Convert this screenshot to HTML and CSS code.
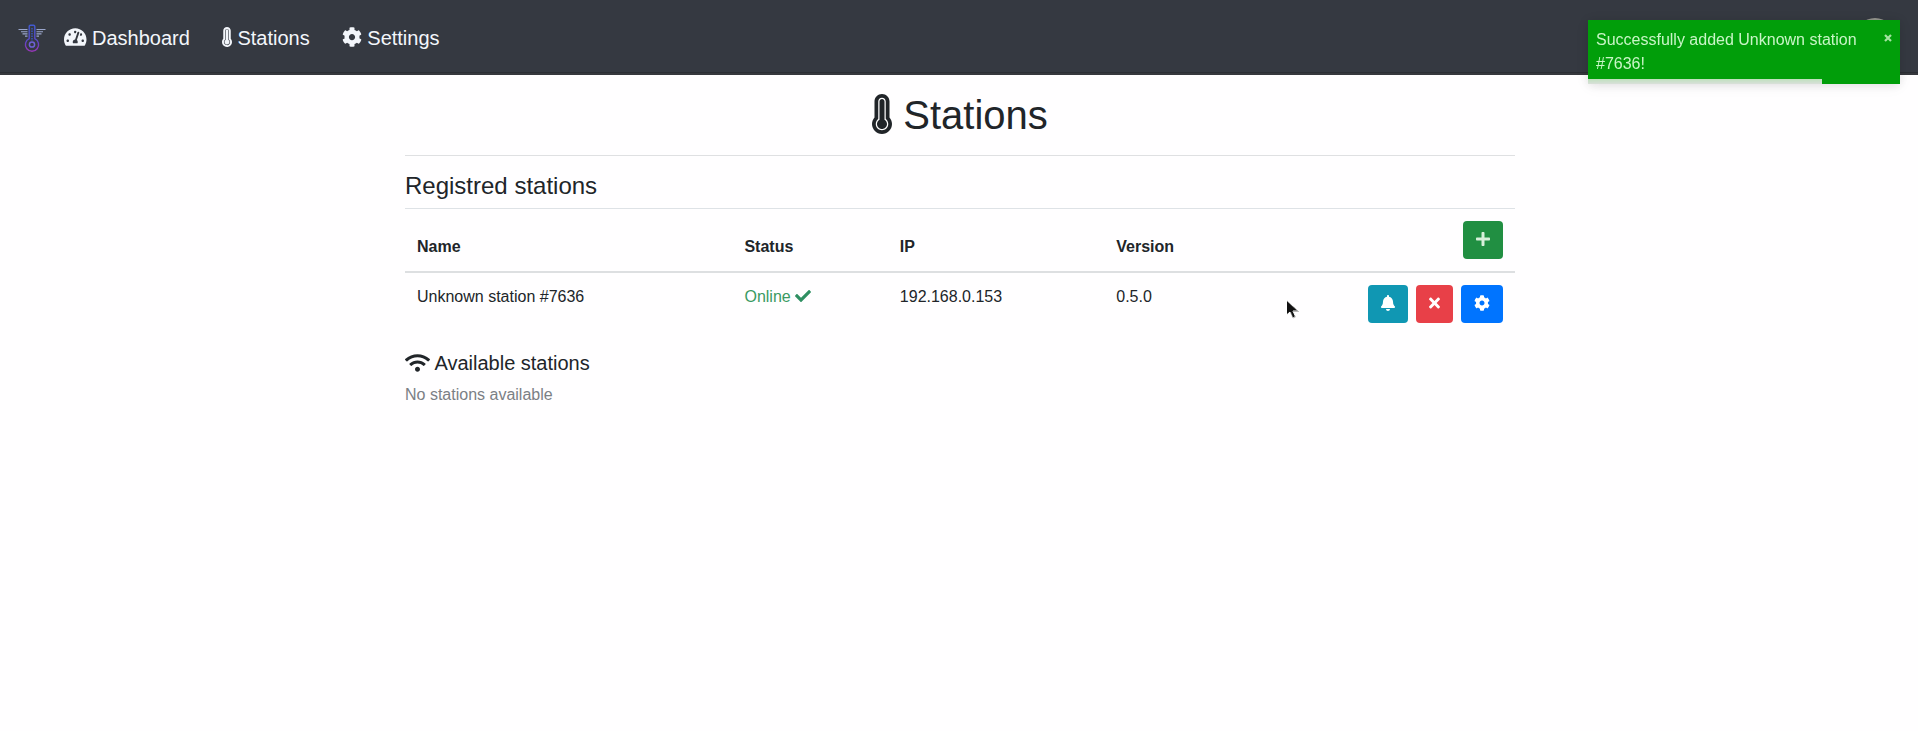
FILE: index.html
```html
<!DOCTYPE html>
<html lang="en">
<head>
<meta charset="utf-8">
<title>Stations</title>
<link rel="stylesheet" href="styles.css">
</head>
<body>
<svg class="symbols" aria-hidden="true">
  <symbol id="thermometer" viewBox="0 0 256 512"><path d="M224 96c0-53.019-42.981-96-96-96S32 42.981 32 96v203.347C12.225 321.756.166 351.136 0 383.333c-.359 70.303 56.787 128.176 127.089 128.664.299.002.61.003.911.003 70.698 0 128-57.304 128-128 0-32.459-12.088-62.09-32-84.653V96zm-96 368l-.576-.002c-43.86-.304-79.647-36.544-79.423-80.42.173-33.98 19.266-51.652 31.999-66.08V96c0-26.467 21.533-48 48-48s48 21.533 48 48v221.498c12.63 14.312 32 32.164 32 66.502 0 44.112-35.888 80-80 80zm64-80c0 35.346-28.654 64-64 64s-64-28.654-64-64c0-23.685 12.876-44.349 32-55.417V96c0-17.673 14.327-32 32-32s32 14.327 32 32v232.583c19.124 11.068 32 31.732 32 55.417z"/></symbol>
  <symbol id="cog" viewBox="0 0 512 512"><path d="M487.4 315.7l-42.6-24.6c4.3-23.2 4.3-47 0-70.2l42.6-24.6c4.9-2.8 7.1-8.6 5.5-14-11.1-35.6-30-67.8-54.7-94.6-3.8-4.1-10-5.1-14.8-2.3L380.8 110c-17.9-15.4-38.5-27.3-60.8-35.1V25.8c0-5.6-3.9-10.5-9.4-11.7-36.7-8.2-74.3-7.8-109.2 0-5.5 1.2-9.4 6.1-9.4 11.7V75c-22.2 7.9-42.8 19.8-60.8 35.1L88.7 85.5c-4.9-2.8-11-1.9-14.8 2.3-24.7 26.7-43.6 58.9-54.7 94.6-1.7 5.4.6 11.2 5.5 14L67.3 221c-4.3 23.2-4.3 47 0 70.2l-42.6 24.6c-4.9 2.8-7.1 8.6-5.5 14 11.1 35.6 30 67.8 54.7 94.6 3.8 4.1 10 5.1 14.8 2.3l42.6-24.6c17.9 15.4 38.5 27.3 60.8 35.1v49.2c0 5.6 3.9 10.5 9.4 11.7 36.7 8.2 74.3 7.8 109.2 0 5.5-1.2 9.4-6.1 9.4-11.7v-49.2c22.2-7.9 42.8-19.8 60.8-35.1l42.6 24.6c4.9 2.8 11 1.9 14.8-2.3 24.7-26.7 43.6-58.9 54.7-94.6 1.5-5.5-.7-11.3-5.6-14.1zM256 336c-44.1 0-80-35.9-80-80s35.9-80 80-80 80 35.9 80 80-35.9 80-80 80z"/></symbol>
</svg>

<header class="navbar">
  <a class="brand" href="#" aria-label="Home">
    <svg class="logo" viewBox="0 0 28 28" fill="none">
      <defs>
        <linearGradient id="logo-fade" gradientUnits="userSpaceOnUse" x1="0" y1="0" x2="0" y2="28">
          <stop offset="0" stop-color="#3f5bd0"/><stop offset=".6" stop-color="#5b48c8"/><stop offset="1" stop-color="#9a35b5"/>
        </linearGradient>
      </defs>
      <path d="M.500 5.500h9M3 7.700h6.500M4.500 9.900h5M7 12.100h2.500M27.500 5.500h-9M25 7.700h-6.500M23.500 9.900h-5M21 12.100h-2.500" stroke="#9aa6cc" stroke-width="1.100"/>
      <path d="M11.200 14.700V2.500q0-1.300 1.300-1.300h3q1.300 0 1.300 1.300v12.200a6.600 6.600 0 1 1-5.600 0z" stroke="url(#logo-fade)" stroke-width="1.400"/>
      <path d="M14 4v13" stroke="#3b52b8" stroke-width="1.600" stroke-dasharray="1.500 1"/>
      <circle cx="14" cy="20.500" r="2.600" stroke="#7060d8" stroke-width="1.500"/>
    </svg>
  </a>
  <nav class="menu">
    <a href="#"><svg class="icon w-gauge" viewBox="0 0 576 512"><path d="M288 32C128.940 32 0 160.940 0 320c0 52.800 14.250 102.260 39.060 144.800 5.610 9.620 16.300 15.200 27.440 15.200h443c11.140 0 21.830-5.580 27.440-15.200C561.750 422.260 576 372.800 576 320c0-159.060-128.940-288-288-288zm0 64c14.710 0 26.580 10.130 30.320 23.650-1.110 2.260-2.640 4.230-3.450 6.670l-9.220 27.670c-5.130 3.490-10.970 6.010-17.640 6.010-17.670 0-32-14.330-32-32S270.330 96 288 96zM96 384c-17.670 0-32-14.330-32-32s14.330-32 32-32 32 14.330 32 32-14.330 32-32 32zm48-160c-17.670 0-32-14.330-32-32s14.330-32 32-32 32 14.330 32 32-14.330 32-32 32zm246.770-72.410l-61.330 184C343.130 347.330 352 364.540 352 384c0 11.720-3.380 22.550-8.880 32H232.880c-5.500-9.450-8.880-20.280-8.880-32 0-33.940 26.500-61.430 59.900-63.590l61.340-184.010c4.170-12.560 17.730-19.450 30.360-15.170 12.570 4.190 19.350 17.790 15.170 30.360zm14.660 57.200l15.520-46.550c3.470-1.290 7.130-2.230 11.050-2.230 17.670 0 32 14.330 32 32s-14.330 32-32 32c-11.380-.010-20.890-6.280-26.570-15.220zM480 384c-17.670 0-32-14.330-32-32s14.330-32 32-32 32 14.330 32 32-14.330 32-32 32z"/></svg> Dashboard</a>
    <a href="#"><svg class="icon w-thermometer"><use href="#thermometer"/></svg> Stations</a>
    <a href="#"><svg class="icon w-cog"><use href="#cog"/></svg> Settings</a>
  </nav>
  <span class="avatar"></span>
</header>

<main class="container">
  <h1><svg class="icon w-thermometer"><use href="#thermometer"/></svg> Stations</h1>
  <hr>
  <h2>Registred stations</h2>
  <table class="stations">
    <colgroup><col class="col-name"><col class="col-status"><col class="col-ip"><col class="col-version"><col></colgroup>
    <thead>
      <tr>
        <th scope="col">Name</th><th scope="col">Status</th><th scope="col">IP</th><th scope="col">Version</th>
        <th><div class="actions">
          <button class="btn add" type="button" aria-label="Add station"><svg class="icon w-narrow" viewBox="0 0 448 512"><path d="M416 208H272V64c0-17.670-14.330-32-32-32h-32c-17.670 0-32 14.330-32 32v144H32c-17.670 0-32 14.330-32 32v32c0 17.670 14.330 32 32 32h144v144c0 17.670 14.330 32 32 32h32c17.670 0 32-14.330 32-32V304h144c17.670 0 32-14.330 32-32v-32c0-17.670-14.330-32-32-32z"/></svg></button>
        </div></th>
      </tr>
    </thead>
    <tbody>
      <tr>
        <td>Unknown station #7636</td>
        <td class="online">Online <svg class="icon w-cog" viewBox="0 0 512 512"><path d="M173.898 439.404l-166.400-166.400c-9.997-9.997-9.997-26.206 0-36.204l36.203-36.204c9.997-9.998 26.207-9.998 36.204 0L192 312.690 432.095 72.596c9.997-9.997 26.207-9.997 36.204 0l36.203 36.204c9.997 9.997 9.997 26.206 0 36.204l-294.400 294.401c-9.998 9.997-26.207 9.997-36.204-.001z"/></svg></td>
        <td>192.168.0.153</td>
        <td>0.5.0</td>
        <td><div class="actions">
          <button class="btn identify" type="button" aria-label="Identify"><svg class="icon w-narrow" viewBox="0 0 448 512"><path d="M224 512c35.320 0 63.970-28.650 63.970-64H160.030c0 35.350 28.650 64 63.970 64zm215.390-149.710c-19.320-20.760-55.470-51.990-55.470-154.290 0-77.700-54.480-139.900-127.940-155.160V32c0-17.670-14.320-32-31.980-32s-31.980 14.330-31.980 32v20.840C118.560 68.100 64.080 130.300 64.080 208c0 102.300-36.150 133.530-55.470 154.290-6 6.450-8.660 14.160-8.610 21.710.110 16.400 12.980 32 32.100 32h383.800c19.120 0 32-15.600 32.100-32 .050-7.550-2.610-15.270-8.610-21.710z"/></svg></button>
          <button class="btn remove" type="button" aria-label="Remove"><svg class="icon w-times" viewBox="0 0 352 512"><path d="M242.720 256l100.070-100.070c12.280-12.280 12.280-32.190 0-44.480l-22.240-22.240c-12.280-12.280-32.190-12.280-44.480 0L176 189.280 75.930 89.210c-12.280-12.280-32.190-12.280-44.480 0L9.210 111.450c-12.280 12.280-12.280 32.190 0 44.480L109.280 256 9.210 356.070c-12.280 12.280-12.280 32.190 0 44.480l22.240 22.240c12.280 12.280 32.200 12.280 44.480 0L176 322.720l100.070 100.070c12.280 12.280 32.200 12.280 44.480 0l22.240-22.240c12.280-12.280 12.280-32.190 0-44.480L242.720 256z"/></svg></button>
          <button class="btn configure" type="button" aria-label="Configure"><svg class="icon w-cog"><use href="#cog"/></svg></button>
        </div></td>
      </tr>
    </tbody>
  </table>
  <h3><svg class="icon w-wifi" viewBox="0 0 640 512"><path d="M634.910 154.880C457.740-8.990 182.190-8.930 5.090 154.880c-6.660 6.160-6.790 16.590-.350 22.980l34.240 33.970c6.140 6.100 16.020 6.230 22.400.380 145.920-133.680 371.300-133.710 517.250 0 6.380 5.850 16.260 5.710 22.400-.380l34.240-33.970c6.430-6.390 6.300-16.820-.360-22.980zM320 352c-35.350 0-64 28.650-64 64s28.650 64 64 64 64-28.650 64-64-28.650-64-64-64zm202.670-83.590c-115.260-101.930-290.210-101.820-405.340 0-6.900 6.100-7.120 16.690-.570 23.150l34.440 33.990c6 5.920 15.660 6.320 22.050.8 83.950-72.570 209.740-72.410 293.490 0 6.390 5.520 16.050 5.130 22.050-.8l34.440-33.990c6.560-6.460 6.330-17.060-.560-23.150z"/></svg> Available stations</h3>
  <p class="empty">No stations available</p>
</main>

<div class="toast" role="status">
  <p>Successfully added Unknown station #7636!</p>
  <button class="close" type="button" aria-label="Close"><svg viewBox="0 0 8 8"><path d="M1 1l6 6M7 1l-6 6" stroke="currentColor" stroke-width="2.200"/></svg></button>
  <div class="progress"></div>
</div>

<svg class="cursor" viewBox="0 0 13 20" aria-hidden="true"><path d="M.500 1v15l3.500-3 2.500 6 3-1.500-2.500-5.500h5z" fill="#111" stroke="#fff"/><path d="M6.500 12.500h6l-5-5M4.500 13l2.700 6 2.500-1.300" fill="none" stroke="#888" stroke-width=".6"/></svg>
</body>
</html>
```
FILE: styles.css
```css
* { box-sizing: border-box; }

body {
  margin: 0;
  background: #fffeff;
  color: #212529;
  font: 16px/24px "Liberation Sans", Arial, sans-serif;
}

h1, h2, h3, p { margin: 0; font-weight: 400; }

.symbols { position: absolute; width: 0; height: 0; }

.icon {
  height: 1em;
  fill: currentColor;
  vertical-align: -0.125em;
  overflow: visible;
}
.w-gauge { width: 1.125em; }
.w-thermometer { width: 0.5em; }
.w-cog { width: 1em; }
.w-narrow { width: 0.875em; }
.w-times { width: 0.6875em; }
.w-wifi { width: 1.25em; }

.navbar {
  display: flex;
  align-items: center;
  height: 75px;
  padding: 0 23px 0 18px;
  background: #353941;
  box-shadow: inset 0 -2px #36383d, inset 0 -3px #2b2e34;
}
.brand { display: flex; margin-right: 18px; }
.logo { width: 28px; height: 28px; }
.menu { display: flex; gap: 32px; font-size: 20px; }
.menu a { color: #f3f6fb; text-decoration: none; }
.avatar {
  width: 40px;
  height: 40px;
  margin-left: auto;
  border-radius: 50%;
  background: #96978f;
}

.container {
  max-width: 1140px;
  margin: 0 auto;
  padding: 16px 14px 16px 16px;
}
h1 { font-size: 40px; line-height: 48px; text-align: center; }
hr {
  margin: 16px 0 15px;
  border: 0;
  border-top: 1px solid #dfe0e2;
}
h2 { margin-bottom: 8px; font-size: 24px; line-height: 29px; }
h3 { margin-bottom: 8px; font-size: 20px; line-height: 24px; }

.stations {
  width: 100%;
  margin-bottom: 16px;
  border-spacing: 0;
  table-layout: fixed;
}
.col-name { width: 29.5%; }
.col-status { width: 14%; }
.col-ip { width: 19.5%; }
.col-version { width: 16%; }
.stations th, .stations td { padding: 12px; text-align: left; }
.stations th {
  border-top: 1px solid #dee2e6;
  border-bottom: 2px solid #dddfe1;
  vertical-align: bottom;
}
.stations td { vertical-align: top; }
.online { color: #3a9a62; }
.online .icon { color: #2f8f62; }
.actions { display: flex; justify-content: flex-end; gap: 8px; }

.btn {
  height: 38px;
  padding: 0 13px;
  border: 0;
  border-radius: 4px;
  color: #fff;
  font: inherit;
}
.add { background: #218f42; color: #d8f0da; }
.identify { background: #1097b3; }
.remove { background: #e84048; }
.configure { background: #0074ff; }

.empty { color: #7b8085; }

.toast {
  position: fixed;
  top: 20px;
  right: 18px;
  display: flex;
  width: 312px;
  min-height: 64px;
  padding: 8px;
  background: #019e0a;
  color: #c8f5c6;
  box-shadow: 0 1px 10px rgba(0, 0, 0, 0.1), 0 2px 15px rgba(0, 0, 0, 0.05);
}
.toast p { flex: 1; }
.close {
  align-self: flex-start;
  width: 8px;
  height: 20px;
  padding: 0;
  border: 0;
  background: none;
  color: #a5e3a2;
}
.close svg { display: block; width: 8px; height: 8px; }
.progress {
  position: absolute;
  bottom: 0;
  left: 0;
  width: 75%;
  height: 5px;
  background: linear-gradient(#bfe0be, #d9e0d9);
}

.cursor {
  position: absolute;
  top: 299px;
  left: 1286px;
  width: 13px;
  height: 20px;
}
```
